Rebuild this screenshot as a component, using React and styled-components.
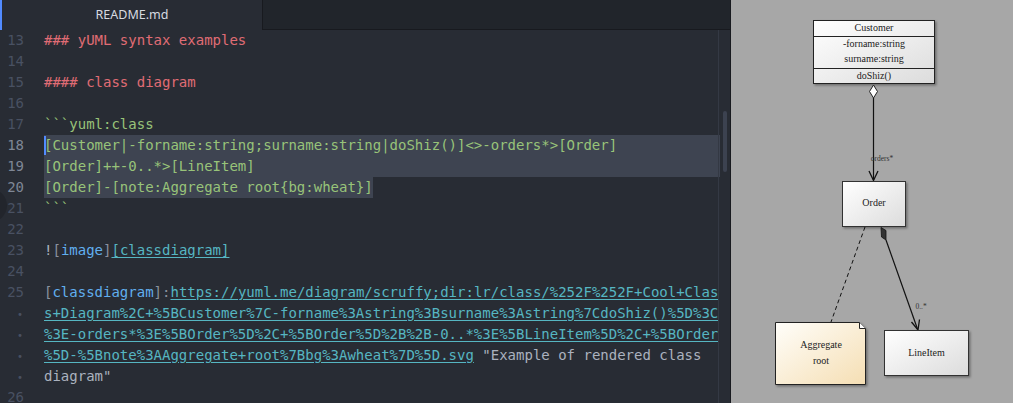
import styled, { createGlobalStyle, css } from 'styled-components';

const GlobalStyle = createGlobalStyle`
  html, body {
    margin: 0;
    padding: 0;
    background: #282c34;
  }
  #root {
    width: 1013px;
    height: 403px;
    overflow: hidden;
  }
`;

const Window = styled.div`
  display: flex;
  width: 1013px;
  height: 403px;
  overflow: hidden;
`;

const EditorPane = styled.div`
  position: relative;
  width: 730px;
  flex-shrink: 0;
  display: flex;
  flex-direction: column;
  background: #282c34;
  border-right: 1px solid #181a1f;
  overflow: hidden;
`;

const TabBar = styled.div`
  display: flex;
  height: 30px;
  flex-shrink: 0;
  background: #21252b;
`;

const Tab = styled.div`
  width: 262px;
  display: flex;
  align-items: center;
  justify-content: center;
  background: #282c34;
  border-left: 2px solid #528bff;
  color: #d7dae0;
  font-family: "Noto Sans", "DejaVu Sans", sans-serif;
  font-size: 12.5px;
  padding-bottom: 2px;
  box-sizing: border-box;
`;

const TabFiller = styled.div`
  flex: 1;
  border-left: 1px solid #181a1f;
  border-bottom: 1px solid #181a1f;
`;

const Lines = styled.div`
  display: flex;
  flex-direction: column;
  font-family: "DejaVu Sans Mono", "Liberation Mono", monospace;
  font-size: 14px;
`;

const Row = styled.div`
  display: flex;
  height: 21px;
  line-height: 21px;
  white-space: pre;
`;

const Gutter = styled.div`
  width: 44px;
  flex-shrink: 0;
  box-sizing: border-box;
  padding-right: ${({ $wrap }) => ($wrap ? '20px' : '20px')};
  text-align: right;
  color: ${({ $active }) => ($active ? '#7f8796' : '#495162')};
`;

const Bullet = styled.span`
  display: inline-block;
  width: 6px;
  text-align: center;
  margin-right: 1px;
  color: #495162;
  font-size: 10px;
`;

const Code = styled.div`
  position: relative;
  width: 676px;
  ${({ $sel }) => $sel === 'full' && css`
    background: #3e4451;
  `}
`;

const SelSpan = styled.span`
  background: ${({ $on }) => ($on ? '#3e4451' : 'transparent')};
  display: inline-block;
`;

const Cursor = styled.span`
  position: absolute;
  left: 0;
  top: 1px;
  width: 2px;
  height: 19px;
  background: #528bff;
`;

const colors = {
  head: '#e06c75',
  code: '#98c379',
  gray: '#abb2bf',
  dim: '#8a919e',
  blue: '#61afef',
  link: '#56b6c2',
};

const Tok = styled.span`
  color: ${({ $k }) => colors[$k]};
  ${({ $u }) => $u && css`
    text-decoration: underline;
    text-underline-offset: 2px;
  `}
`;

const WrapGuide = styled.div`
  position: absolute;
  left: 718px;
  top: 30px;
  bottom: 0;
  width: 1px;
  background: #343944;
`;

const ScrollThumb = styled.div`
  position: absolute;
  left: 723px;
  top: 111px;
  width: 4px;
  height: 61px;
  border-radius: 3px;
  background: #3c4250;
`;

const EdgeBlob = styled.div`
  position: absolute;
  left: -26px;
  top: 189px;
  width: 33px;
  height: 33px;
  border-radius: 50%;
  background: #22252c;
`;

const PreviewPane = styled.div`
  flex: 1;
  background: #a7a7a7;
  display: flex;
`;

const url1 = 'https://yuml.me/diagram/scruffy;dir:lr/class/%252F%252F+Cool+Clas';

const rows = [
  { n: 13, toks: [['head', '### yUML syntax examples']] },
  { n: 14, toks: [] },
  { n: 15, toks: [['head', '#### class diagram']] },
  { n: 16, toks: [] },
  { n: 17, toks: [['code', '```yuml:class']] },
  { n: 18, sel: 'full', cursor: true, toks: [['code', '[Customer|-forname:string;surname:string|doShiz()]<>-orders*>[Order]']] },
  { n: 19, sel: 'full', toks: [['code', '[Order]++-0..*>[LineItem]']] },
  { n: 20, sel: 'text', toks: [['code', '[Order]-[note:Aggregate root{bg:wheat}]']] },
  { n: 21, toks: [['code', '```']] },
  { n: 22, toks: [] },
  {
    n: 23,
    toks: [['gray', '!'], ['dim', '['], ['blue', 'image'], ['dim', ']'], ['link', '[classdiagram]', true]],
  },
  { n: 24, toks: [] },
  {
    n: 25,
    toks: [['dim', '['], ['blue', 'classdiagram'], ['dim', ']:'], ['link', url1, true]],
  },
  { wrap: true, toks: [['link', 's+Diagram%2C+%5BCustomer%7C-forname%3Astring%3Bsurname%3Astring%7CdoShiz()%5D%3C', true]] },
  { wrap: true, toks: [['link', '%3E-orders*%3E%5BOrder%5D%2C+%5BOrder%5D%2B%2B-0..*%3E%5BLineItem%5D%2C+%5BOrder', true]] },
  { wrap: true, toks: [['link', '%5D-%5Bnote%3AAggregate+root%7Bbg%3Awheat%7D%5D.svg', true], ['gray', ' "Example of rendered class']] },
  { wrap: true, toks: [['gray', 'diagram"']] },
  { n: 26, toks: [] },
];

const CodeRow = ({ row }) => {
  const content = row.toks.map(([k, t, u], i) => (
    <Tok key={i} $k={k} $u={u}>{t}</Tok>
  ));
  return (
    <Row>
      <Gutter $active={!!row.sel}>
        {row.wrap ? <Bullet>•</Bullet> : row.n}
      </Gutter>
      <Code $sel={row.sel}>
        {row.sel === 'text' ? <SelSpan $on>{content}</SelSpan> : content}
        {row.cursor && <Cursor />}
      </Code>
    </Row>
  );
};

const Diagram = () => (
  <svg width="282" height="403" viewBox="0 0 282 403" fontFamily="'Liberation Serif', 'DejaVu Serif', serif">
    <defs>
      <linearGradient id="boxg" x1="0" y1="0" x2="1" y2="1">
        <stop offset="0" stopColor="#ffffff" />
        <stop offset="1" stopColor="#dcdcdc" />
      </linearGradient>
      <linearGradient id="noteg" x1="0" y1="0" x2="1" y2="1">
        <stop offset="0" stopColor="#fffefa" />
        <stop offset="1" stopColor="#f5deb3" />
      </linearGradient>
      <filter id="sh" x="-20%" y="-20%" width="140%" height="140%">
        <feDropShadow dx="1.5" dy="1.5" stdDeviation="1" floodColor="#000" floodOpacity="0.35" />
      </filter>
    </defs>

    {/* Customer */}
    <g filter="url(#sh)">
      <rect x="82.5" y="20.5" width="121" height="63" fill="url(#boxg)" stroke="#222" strokeWidth="1" />
    </g>
    <line x1="82.5" y1="36.5" x2="203.5" y2="36.5" stroke="#222" />
    <line x1="82.5" y1="68.5" x2="203.5" y2="68.5" stroke="#222" />
    <g fontSize="10" fill="#222" textAnchor="middle">
      <text x="143" y="31">Customer</text>
      <text x="143" y="47">-forname:string</text>
      <text x="143" y="62">surname:string</text>
      <text x="143" y="79">doShiz()</text>
    </g>

    {/* aggregation */}
    <polygon points="142.5,85 146.5,91.5 142.5,98 138.5,91.5" fill="#fff" stroke="#222" strokeWidth="1" />
    <line x1="142.5" y1="98" x2="142.5" y2="180" stroke="#111" strokeWidth="1.2" />
    <polyline points="138,171 142.5,180.5 147,171" fill="none" stroke="#111" strokeWidth="1.3" />
    <text x="151" y="161" fontSize="7.5" fill="#333" textAnchor="middle">orders*</text>

    {/* Order */}
    <g filter="url(#sh)">
      <rect x="111.5" y="181.5" width="63" height="45" fill="url(#boxg)" stroke="#333" />
    </g>
    <text x="143" y="206" fontSize="10" fill="#222" textAnchor="middle">Order</text>

    {/* note link */}
    <line x1="134" y1="227" x2="100" y2="322" stroke="#111" strokeWidth="1" strokeDasharray="4,3" />

    {/* composition */}
    <polygon points="150,227.5 155,230.5 155,240 150.5,237" fill="#333" stroke="#111" strokeWidth="0.8" />
    <line x1="155" y1="240" x2="186.5" y2="329" stroke="#111" strokeWidth="1.2" />
    <polyline points="180.5,322 187,330 188.5,319.5" fill="none" stroke="#111" strokeWidth="1.3" />
    <text x="190" y="309" fontSize="7.5" fill="#333" textAnchor="middle">0..*</text>

    {/* note */}
    <g filter="url(#sh)">
      <path d="M44.5 322.5 H128.5 L134.5 328.5 V384.5 H44.5 Z" fill="url(#noteg)" stroke="#222" />
    </g>
    <path d="M128.5 322.5 V328.5 H134.5" fill="#fff" stroke="#222" />
    <g fontSize="10" fill="#222" textAnchor="middle">
      <text x="90" y="348">Aggregate</text>
      <text x="90" y="364">root</text>
    </g>

    {/* LineItem */}
    <g filter="url(#sh)">
      <rect x="153.5" y="330.5" width="84" height="45" fill="url(#boxg)" stroke="#333" />
    </g>
    <text x="195.5" y="356" fontSize="10" fill="#222" textAnchor="middle">LineItem</text>
  </svg>
);

export default function App() {
  return (
    <>
      <GlobalStyle />
      <Window>
        <EditorPane>
          <TabBar>
            <Tab>README.md</Tab>
            <TabFiller />
          </TabBar>
          <Lines>
            {rows.map((row, i) => (
              <CodeRow key={i} row={row} />
            ))}
          </Lines>
          <WrapGuide />
          <ScrollThumb />
          <EdgeBlob />
        </EditorPane>
        <PreviewPane>
          <Diagram />
        </PreviewPane>
      </Window>
    </>
  );
}
